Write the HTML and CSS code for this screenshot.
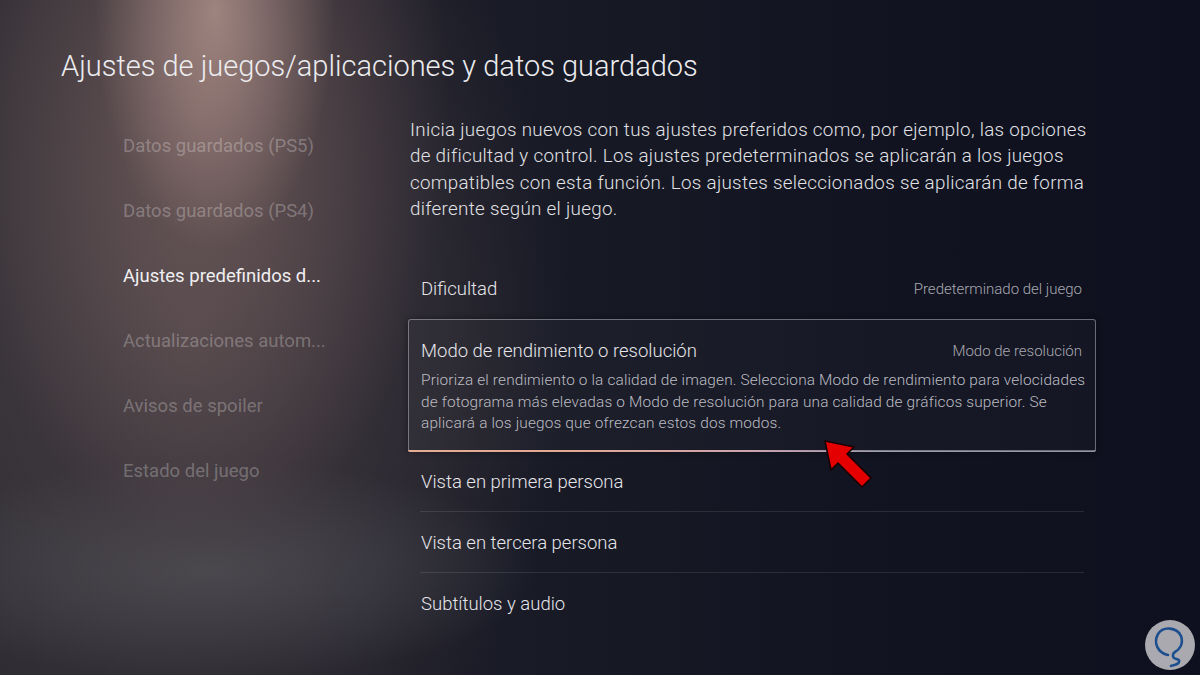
FILE: index.html
```html
<!DOCTYPE html>
<html lang="es">
<head>
  <meta charset="UTF-8" />
  <meta name="viewport" content="width=device-width, initial-scale=1.0"/>
  <title>Ajustes de juegos/aplicaciones y datos guardados</title>
  <link rel="stylesheet" href="styles.css">
</head>
<body>
  <h1 class="page-title">Ajustes de juegos/aplicaciones y datos guardados</h1>

  <div class="layout">
    <ul class="side-nav">
      <li class="nav-item">Datos guardados (PS5)</li>
      <li class="nav-item">Datos guardados (PS4)</li>
      <li class="nav-item active">Ajustes predefinidos d...</li>
      <li class="nav-item">Actualizaciones autom...</li>
      <li class="nav-item">Avisos de spoiler</li>
      <li class="nav-item">Estado del juego</li>
    </ul>

    <div class="content">
      <p class="intro">
        Inicia juegos nuevos con tus ajustes preferidos como, por ejemplo, las opciones<br>
        de dificultad y control. Los ajustes predeterminados se aplicarán a los juegos<br>
        compatibles con esta función. Los ajustes seleccionados se aplicarán de forma<br>
        diferente según el juego.
      </p>

      <div class="settings">
        <div class="row">
          <span class="row-label">Dificultad</span>
          <span class="row-value">Predeterminado del juego</span>
        </div>

        <div class="row selected">
          <div class="row-head">
            <span class="row-label">Modo de rendimiento o resolución</span>
            <span class="row-value">Modo de resolución</span>
          </div>
          <p class="row-desc">
            Prioriza el rendimiento o la calidad de imagen. Selecciona Modo de rendimiento para velocidades<br>
            de fotograma más elevadas o Modo de resolución para una calidad de gráficos superior. Se<br>
            aplicará a los juegos que ofrezcan estos dos modos.
          </p>
        </div>

        <div class="row divided">
          <span class="row-label">Vista en primera persona</span>
        </div>
        <div class="row divided">
          <span class="row-label">Vista en tercera persona</span>
        </div>
        <div class="row">
          <span class="row-label">Subtítulos y audio</span>
        </div>
      </div>
    </div>
  </div>

  <!-- red pointer drawn over the screenshot -->
  <svg class="pointer" width="52" height="52" viewBox="0 0 52 52">
    <polygon points="3,3 32,9 25,16 49,40 40,49 16,25 9,32" fill="#e40000" stroke="#1a0000" stroke-width="1.6" stroke-linejoin="round"/>
  </svg>

  <!-- watermark -->
  <svg class="watermark" width="52" height="52" viewBox="0 0 52 52">
    <circle cx="26" cy="26" r="25" fill="#a9a9af"/>
    <path d="M24 36 C14 34 9 24 14 15 C19 7 33 8 37 17 C40 25 35 31 31 33 C29 34 28 37 30 39 C33 41 36 40 35 43 C34 46 29 46 27 47" fill="none" stroke="#1d4f8f" stroke-width="2.6" stroke-linecap="round"/>
  </svg>
</body>
</html>
```

FILE: styles.css
```css
body {
  margin: 0;
  width: 1200px;
  height: 675px;
  overflow: hidden;
  position: relative;
  font-family: Roboto, "Open Sans", sans-serif;
  color: #e6e6e9;
  background:
    radial-gradient(ellipse 120px 240px at 215px 10px, rgba(205, 170, 160, 0.6), transparent),
    radial-gradient(ellipse 250px 430px at 200px 110px, rgba(150, 118, 114, 0.5), transparent),
    radial-gradient(ellipse 380px 520px at 190px 330px, rgba(82, 72, 76, 0.75), transparent),
    radial-gradient(ellipse 330px 110px at 210px 570px, rgba(95, 100, 106, 0.55), transparent),
    linear-gradient(90deg, #2a2930 0, #24222b 25%, #181a26 45%, #121421 70%, #0e101f 100%);
}

.page-title {
  margin: 0;
  padding: 47px 0 0 61px;
  font-size: 29px;
  font-weight: 300;
  line-height: 38px;
  color: #ececef;
}

.layout {
  display: grid;
  grid-template-columns: 408px 688px;
  margin-top: 32px;
}

/* Left menu */
.side-nav {
  list-style: none;
  margin: -3px 0 0;
  padding: 0 0 0 123px;
}

.nav-item {
  height: 65px;
  line-height: 65px;
  font-size: 18.5px;
  color: rgba(255, 255, 255, 0.27);
  white-space: nowrap;
}

.nav-item.active {
  color: #f0f0f2;
}

/* Right panel */
.intro {
  margin: 0 0 36px 2px;
  font-size: 18.8px;
  font-weight: 300;
  letter-spacing: 0.3px;
  line-height: 26.3px;
  color: #e2e2e6;
  white-space: nowrap;
}

.row {
  height: 61px;
  display: flex;
  align-items: center;
  justify-content: space-between;
  padding: 0 14px 0 13px;
  position: relative;
}

.row-label {
  font-size: 18.5px;
  font-weight: 300;
  color: #e6e6ea;
}

.row-value {
  font-size: 15px;
  font-weight: 300;
  color: #a9a9b0;
}

.row.divided::after {
  content: "";
  position: absolute;
  left: 12px;
  right: 12px;
  bottom: 1px;
  height: 1px;
  background: rgba(255, 255, 255, 0.1);
}

.row.selected {
  height: auto;
  display: block;
  padding: 19px 13px 16px 12px;
  border: 1px solid rgba(190, 192, 205, 0.5);
  border-radius: 3px;
  background: rgba(255, 255, 255, 0.025);
  box-shadow: 0 0 6px rgba(0, 0, 0, 0.4);
}

.row.selected::after {
  content: "";
  position: absolute;
  left: -1px;
  right: -1px;
  bottom: -1px;
  height: 2px;
  border-radius: 0 0 3px 3px;
  background: linear-gradient(90deg, #e6ad94 0, #e0a894 25%, #cca3b0 50%, rgba(190, 192, 210, 0.6) 70%, rgba(190, 192, 205, 0.5) 100%);
}

.row-head {
  display: flex;
  justify-content: space-between;
  align-items: center;
  height: 24px;
}

.row-desc {
  margin: 7px 0 0;
  font-size: 15.4px;
  font-weight: 300;
  letter-spacing: 0.15px;
  line-height: 21.5px;
  color: #bcbcc2;
  white-space: nowrap;
}

/* Overlays */
.pointer {
  position: absolute;
  left: 822px;
  top: 438px;
}

.watermark {
  position: absolute;
  left: 1144px;
  top: 619px;
}
```
